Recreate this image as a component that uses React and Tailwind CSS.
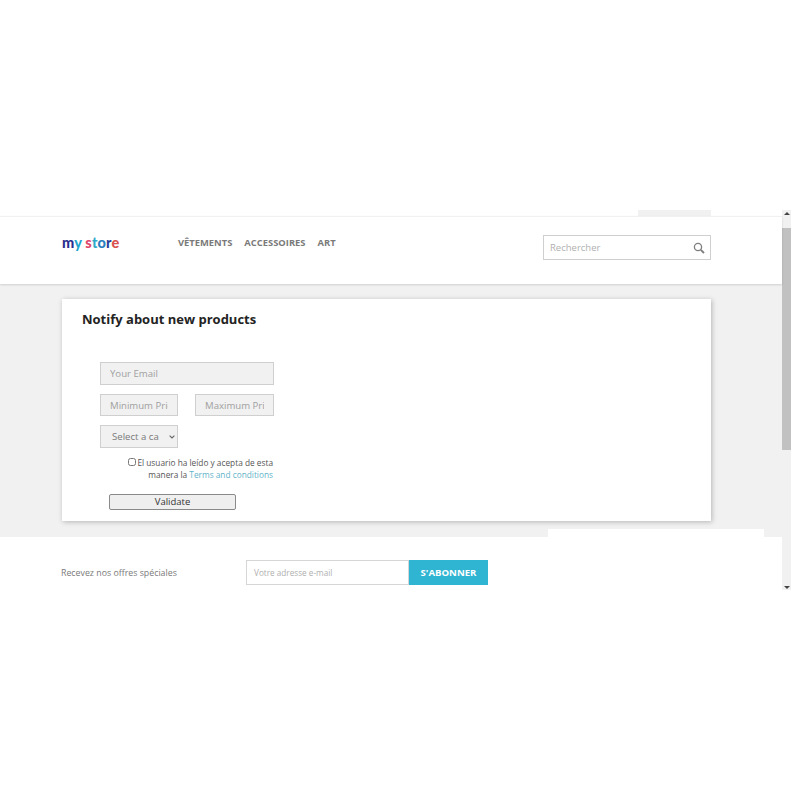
const fieldClass = "bg-[#f1f1f1] border border-[#cfcfcf] text-[9.6px] text-[#7a7a7a] placeholder:text-[#a0a0a0] outline-none";

function Logo() {
    return (
        <div className="w-[116px] text-[14.5px] leading-[16px] font-black tracking-[0.15px] font-['Lato',sans-serif]">
            <span className="text-[#2a2f8f]">m</span>
            <span className="text-[#23a5cf]">y</span>
            <span> </span>
            <span className="text-[#e0466b]">s</span>
            <span className="text-[#2fa9c9]">t</span>
            <span className="text-[#2a7fc0]">o</span>
            <span className="text-[#2a3f98]">r</span>
            <span className="text-[#d9504f]">e</span>
        </div>
    );
}

function Header() {
    return (
        <div className="h-[68px] bg-white border-t border-[#f1f1f1] shadow-[0_1px_2px_rgba(0,0,0,0.14)] relative pl-[62px] pr-[71px] flex items-center justify-between">
            <div className="flex items-center -mt-[15px]">
                <Logo />
                <nav className="flex gap-[12px] text-[9.4px] font-bold text-[#7a7a7a]">
                    <span>VÊTEMENTS</span>
                    <span>ACCESSOIRES</span>
                    <span>ART</span>
                </nav>
            </div>
            <div className="w-[168px] h-[25px] -mt-[6px] border border-[#cfcfcf] flex items-center justify-between pl-[6px] pr-[5px]">
                <span className="text-[9.5px] leading-[14px] pt-[1px] text-[#b0b0b0]">Rechercher</span>
                <svg width="12" height="12" viewBox="0 0 12 12" fill="none" stroke="#7d7d7d" className="mt-[1px]">
                    <circle cx="5" cy="5" r="3.6" strokeWidth="1.3" />
                    <path d="M7.8 7.8 L11 11" strokeWidth="1.8" />
                </svg>
            </div>
        </div>
    );
}

function NotifyCard() {
    return (
        <div className="w-[649px] h-[222px] bg-white shadow-[1px_1px_5px_rgba(0,0,0,0.25)] pt-[11px]">
            <h1 className="pl-[20px] text-[13px] leading-[18px] font-bold text-[#232323]">Notify about new products</h1>
            <div className="w-[174px] ml-[38px] mt-[34px] flex flex-col">
                <input className={`${fieldClass} w-[174px] h-[23px] pl-[9px]`} placeholder="Your Email" />
                <div className="flex justify-between mt-[9px]">
                    <input className={`${fieldClass} w-[78px] h-[22px] pl-[9px] pr-[9px]`} placeholder="Minimum Price" />
                    <input className={`${fieldClass} w-[79px] h-[22px] pl-[9px] pr-[9px]`} placeholder="Maximum Price" />
                </div>
                <div className="w-[78px] h-[23px] mt-[9px] pt-[1px] bg-[#f1f1f1] border border-[#cfcfcf] pl-[11px] pr-[2px] flex items-center justify-between text-[9.6px] text-[#7a7a7a] overflow-hidden">
                    <span className="whitespace-nowrap">Select a ca</span>
                    <svg width="6" height="4" viewBox="0 0 6 4" fill="none" stroke="#666" strokeWidth="1.1" className="shrink-0">
                        <path d="M0.6 0.6 L3 3 L5.4 0.6" />
                    </svg>
                </div>
                <div className="pr-[1px] mt-[9px] text-[8.3px] leading-[12px] text-[#555] text-right whitespace-nowrap">
                    <input type="checkbox" className="w-[8px] h-[8px] mr-[1px] align-[0px]" />
                    El usuario ha leído y acepta de esta<br />
                    manera la <span className="text-[#5fb3c9]">Terms and conditions</span>
                </div>
                <button className="w-[127px] h-[16px] ml-[9px] mt-[13px] bg-[#efefef] border border-[#8a8a8a] rounded-[2px] text-[9.5px] leading-[14px] text-[#333]">Validate</button>
            </div>
        </div>
    );
}

function Newsletter() {
    return (
        <div className="h-[53px] bg-white relative pl-[61px] pt-[23px] flex">
            <div className="absolute left-[548px] -top-[8px] w-[216px] h-[8px] bg-white" />
            <span className="w-[185px] h-[25px] text-[8.8px] leading-[26px] text-[#7a7a7a]">Recevez nos offres spéciales</span>
            <div className="w-[163px] h-[25px] border border-[#d6d6d6] pl-[7px] text-[8.2px] leading-[23px] text-[#b0b0b0]">Votre adresse e-mail</div>
            <div className="w-[79px] h-[25px] bg-[#2fb5d2] text-white text-[9.6px] leading-[25px] font-bold text-center">S'ABONNER</div>
        </div>
    );
}

function Scrollbar() {
    return (
        <div className="w-[9px] h-[380px] bg-[#f1f1f1] flex flex-col items-center justify-between">
            <div className="w-full flex flex-col">
                <div className="h-[18px] pt-[2px] flex justify-center">
                    <div className="w-0 h-0 border-x-[3px] border-x-transparent border-b-[3px] border-b-[#444]" />
                </div>
                <div className="w-full h-[222px] bg-[#c1c1c1]" />
            </div>
            <div className="h-[6px] flex items-center justify-center">
                <div className="w-0 h-0 border-x-[3px] border-x-transparent border-t-[3px] border-t-[#444]" />
            </div>
        </div>
    );
}

export default function App() {
    return (
        <div className="w-[800px] h-[800px] bg-white overflow-hidden font-['Open_Sans',sans-serif]">
            <div className="h-[210px]" />
            <div className="flex w-[791px] h-[380px]">
                <div className="w-[782px] flex flex-col">
                    <div className="h-[6px] bg-white pl-[638px]">
                        <div className="w-[73px] h-[6px] bg-[#f1f1f1]" />
                    </div>
                    <Header />
                    <div className="h-[253px] bg-[#f1f1f1] pl-[62px] pt-[15px]">
                        <NotifyCard />
                    </div>
                    <Newsletter />
                </div>
                <Scrollbar />
            </div>
        </div>
    );
}
